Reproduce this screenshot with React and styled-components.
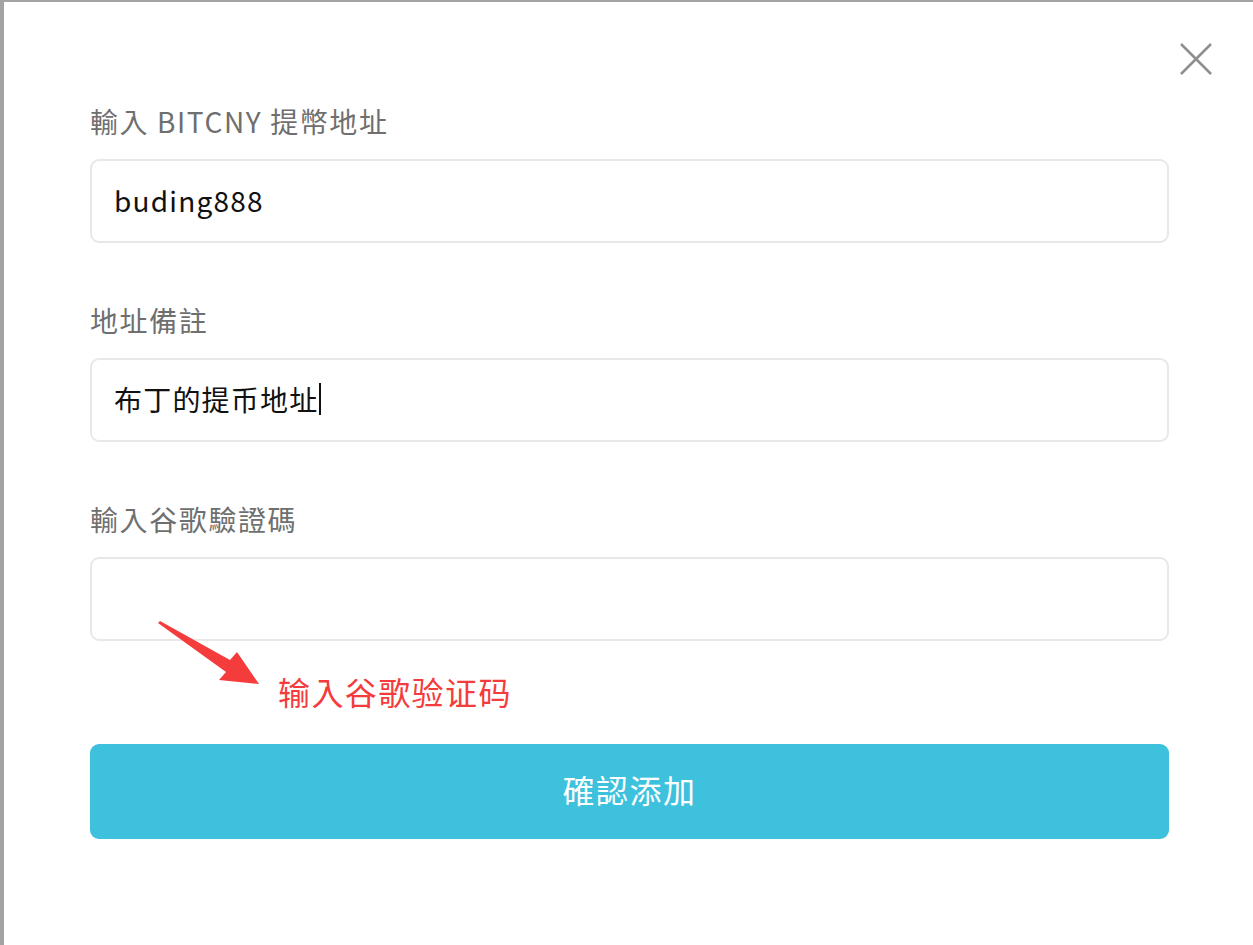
import React from "react";
import styled, { createGlobalStyle } from "styled-components";

const Global = createGlobalStyle`
  html, body { margin: 0; padding: 0; }
  body {
    background: #a3a3a3;
    font-family: "Noto Sans CJK TC", "Noto Sans", sans-serif;
    overflow: hidden;
  }
`;

const Modal = styled.div`
  position: relative;
  margin: 2px 0 0 4px;
  background: #fff;
  height: 943px;
  box-sizing: border-box;
  padding: 101px 84px 0 86px;
  display: flex;
  flex-direction: column;
`;

const Close = styled.button`
  position: absolute;
  top: 38px;
  right: 38px;
  width: 38px;
  height: 38px;
  padding: 0;
  border: none;
  background: transparent;
  cursor: pointer;
`;

const Field = styled.div`
  display: flex;
  flex-direction: column;
  margin-bottom: ${(p) => p.$gap || 0}px;
`;

const Label = styled.div`
  font-size: 28px;
  line-height: 36px;
  height: 40px;
  letter-spacing: 1.6px;
  color: #6f6f6f;
  margin-bottom: 16px;
`;

const InputBox = styled.div`
  height: 84px;
  box-sizing: border-box;
  border: 2px solid #e8e8e8;
  border-radius: 9px;
  padding: 0 22px 3px;
  display: flex;
  align-items: center;
  font-size: 28px;
  letter-spacing: 1.2px;
  color: #111;
`;

const Caret = styled.span`
  display: inline-block;
  width: 2px;
  height: 32px;
  background: #111;
  margin-left: 1px;
`;

const Hint = styled.div`
  position: relative;
  height: 103px;
  display: flex;
  align-items: center;
  padding-left: 188px;
  box-sizing: border-box;
`;

const HintText = styled.span`
  font-size: 32px;
  letter-spacing: 1.4px;
  color: #f43c3c;
  margin-bottom: 3px;
`;

const Arrow = styled.svg`
  position: absolute;
  left: 60px;
  top: -26px;
`;

const Submit = styled.button`
  height: 95px;
  border: none;
  border-radius: 9px;
  background: #3dc1dd;
  color: #fff;
  font-family: "Noto Sans CJK TC", "Noto Sans", sans-serif;
  font-size: 32px;
  letter-spacing: 1.5px;
  padding: 0 0 6px;
  cursor: pointer;
`;

export default function App() {
  return (
    <>
      <Global />
      <Modal>
        <Close aria-label="close">
          <svg width="38" height="38" viewBox="0 0 38 38">
            <path d="M4 4 L34 34 M34 4 L4 34" stroke="#8f8f8f" strokeWidth="2.6" fill="none" />
          </svg>
        </Close>

        <Field $gap={59}>
          <Label>輸入 BITCNY 提幣地址</Label>
          <InputBox>buding888</InputBox>
        </Field>

        <Field $gap={59}>
          <Label>地址備註</Label>
          <InputBox>
            布丁的提币地址
            <Caret />
          </InputBox>
        </Field>

        <Field>
          <Label>輸入谷歌驗證碼</Label>
          <InputBox />
        </Field>

        <Hint>
          <Arrow width="120" height="80" viewBox="0 0 120 80">
            <polygon
              points="8,8 10,6 80,45 87,37 109,69 69,65 76,57"
              fill="#f43c3c"
            />
          </Arrow>
          <HintText>输入谷歌验证码</HintText>
        </Hint>

        <Submit>確認添加</Submit>
      </Modal>
    </>
  );
}
